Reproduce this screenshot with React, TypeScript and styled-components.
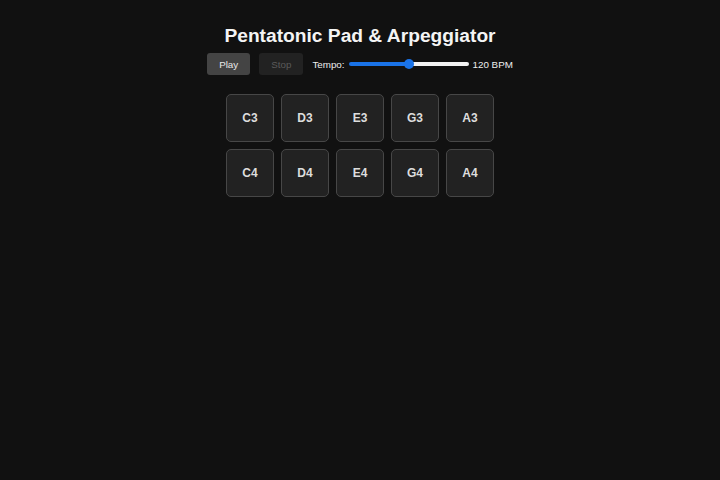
import React, { useState } from 'react';
import styled, { createGlobalStyle } from 'styled-components';

const GlobalStyle = createGlobalStyle`
  html, body {
    margin: 0;
    padding: 0;
    background: #111111;
  }
  body {
    font-family: "Liberation Sans", Arial, sans-serif;
    color: #eeeeee;
  }
`;

const Page = styled.div`
  box-sizing: border-box;
  min-height: 480px;
  display: flex;
  flex-direction: column;
  align-items: center;
  padding-top: 25px;
`;

const Title = styled.h1`
  margin: 0;
  font-size: 19.2px;
  line-height: 22px;
  font-weight: 700;
  color: #f4f4f4;
`;

const Controls = styled.div`
  display: flex;
  align-items: center;
  height: 22px;
  margin-top: 6px;
`;

const Button = styled.button<{ $disabled?: boolean }>`
  height: 22px;
  padding: 0 12px;
  margin-right: 9px;
  border: none;
  border-radius: 3px;
  font-family: inherit;
  font-size: 9.8px;
  background: ${p => (p.$disabled ? '#222222' : '#444444')};
  color: ${p => (p.$disabled ? '#5a5a5a' : '#e8e8e8')};
  cursor: ${p => (p.$disabled ? 'default' : 'pointer')};
`;

const Label = styled.label`
  display: flex;
  align-items: center;
  font-size: 9.8px;
  color: #eeeeee;
`;

const Range = styled.input<{ $fill: number }>`
  -webkit-appearance: none;
  appearance: none;
  width: 120px;
  height: 4px;
  margin: 0 4px;
  border-radius: 2px;
  background: linear-gradient(
    to right,
    #1a73e8 0%,
    #1a73e8 ${p => p.$fill}%,
    #f2f2f2 ${p => p.$fill}%,
    #f2f2f2 100%
  );
  outline: none;

  &::-webkit-slider-thumb {
    -webkit-appearance: none;
    width: 10px;
    height: 10px;
    border-radius: 50%;
    background: #1a73e8;
    border: none;
  }
`;

const Bpm = styled.span`
  font-size: 9.8px;
  color: #eeeeee;
`;

const PadGrid = styled.div`
  display: grid;
  grid-template-columns: repeat(5, 48px);
  grid-auto-rows: 48px;
  gap: 7px;
  margin-top: 19px;
`;

const Pad = styled.button<{ $active?: boolean }>`
  box-sizing: border-box;
  width: 48px;
  height: 48px;
  border: 1px solid #474747;
  border-radius: 5px;
  background: ${p => (p.$active ? '#3a3a3a' : '#222222')};
  color: #dddddd;
  font-family: inherit;
  font-size: 12px;
  font-weight: 700;
  padding: 0;
  cursor: pointer;
`;

const NOTES = ['C3', 'D3', 'E3', 'G3', 'A3', 'C4', 'D4', 'E4', 'G4', 'A4'];

export default function App() {
  const [tempo, setTempo] = useState(120);
  const [playing, setPlaying] = useState(false);
  const min = 60;
  const max = 180;
  const fill = ((tempo - min) / (max - min)) * 100;

  return (
    <>
      <GlobalStyle />
      <Page>
        <Title>Pentatonic Pad &amp; Arpeggiator</Title>
        <Controls>
          <Button onClick={() => setPlaying(true)}>Play</Button>
          <Button $disabled={!playing} onClick={() => setPlaying(false)}>
            Stop
          </Button>
          <Label>
            Tempo:
            <Range
              type="range"
              min={min}
              max={max}
              value={tempo}
              $fill={fill}
              onChange={e => setTempo(Number(e.target.value))}
            />
          </Label>
          <Bpm>{tempo} BPM</Bpm>
        </Controls>
        <PadGrid>
          {NOTES.map(n => (
            <Pad key={n}>{n}</Pad>
          ))}
        </PadGrid>
      </Page>
    </>
  );
}
